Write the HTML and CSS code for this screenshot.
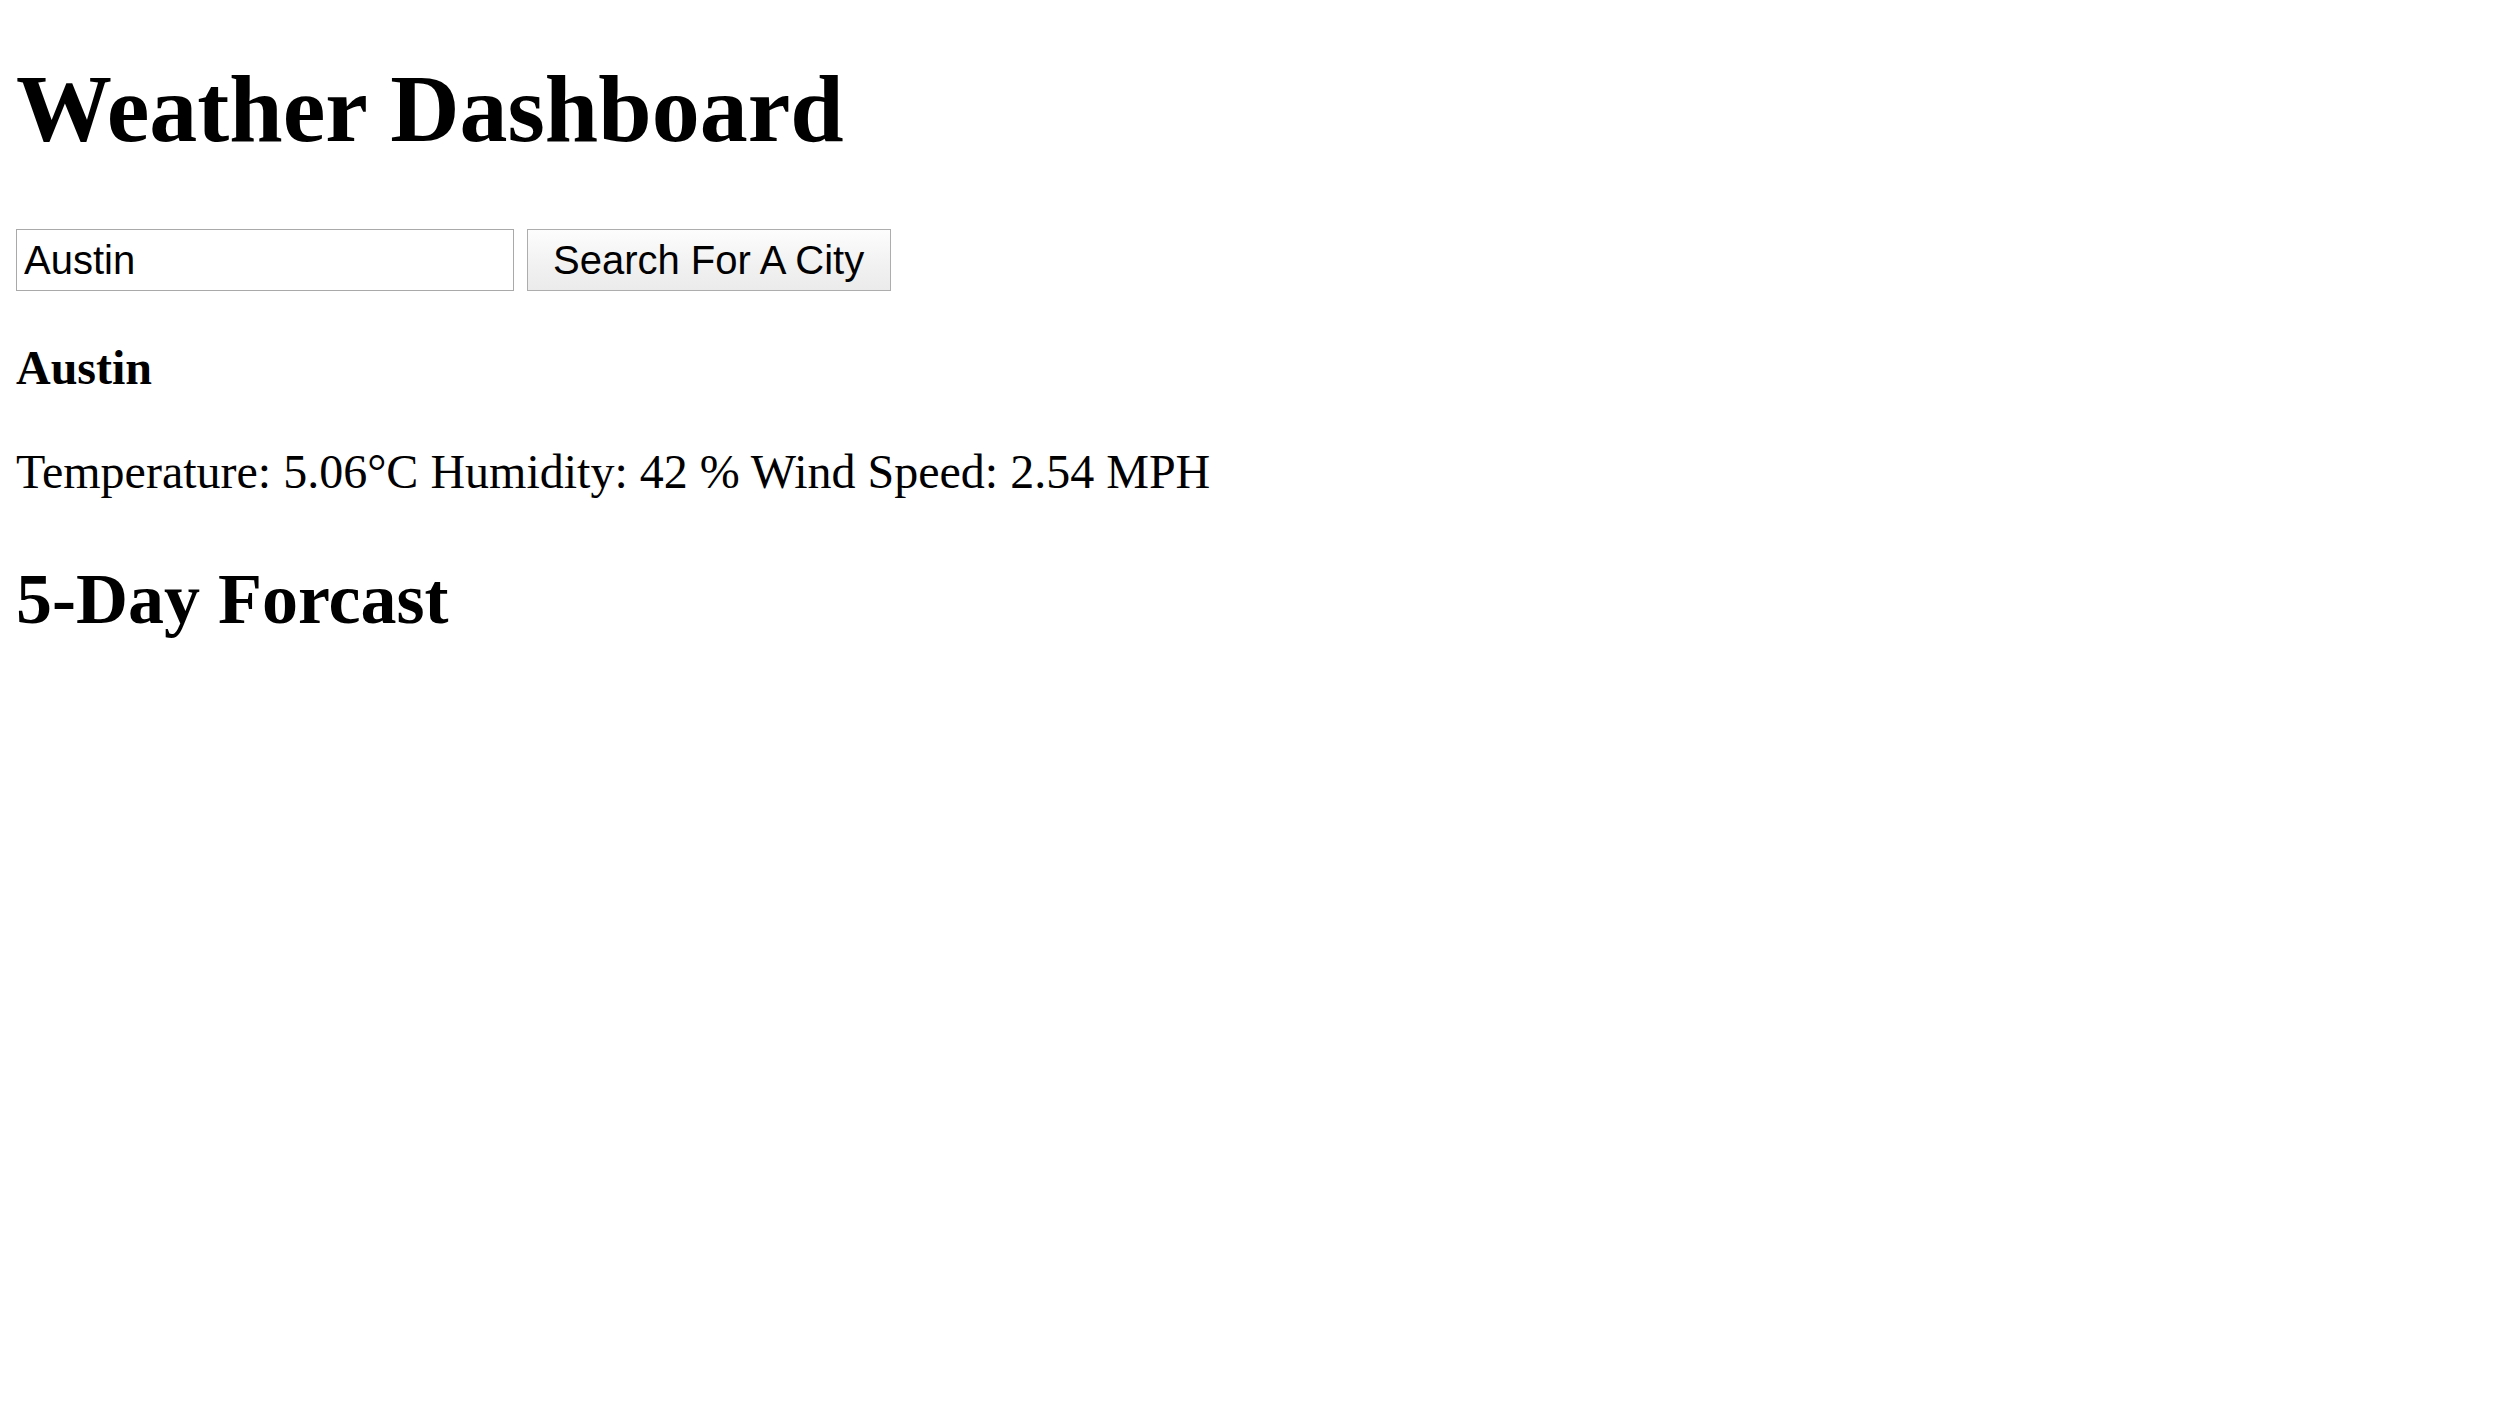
FILE: index.html
```html
<!DOCTYPE html>
<html lang="en">
<head>
<meta charset="utf-8">
<title>Weather Dashboard</title>
<link rel="stylesheet" href="styles.css">
</head>
<body>
  <main class="page">
    <h1 class="title">Weather Dashboard</h1>
    <form class="search" onsubmit="return false;">
      <input class="search-input" type="text" value="Austin">
      <button class="search-btn" type="submit">Search For A City</button>
    </form>
    <h4 class="city">Austin</h4>
    <p class="current">Temperature: 5.06°C Humidity: 42 % Wind Speed: 2.54 MPH</p>
    <h2 class="forecast-title">5-Day Forcast</h2>
  </main>
</body>
</html>
```

FILE: styles.css
```css
html, body {
  margin: 0;
  padding: 0;
  background: #ffffff;
}

body {
  font-family: "Liberation Serif", "Times New Roman", serif;
  color: #000000;
}

.page {
  padding: 0 16px;
  display: flex;
  flex-direction: column;
  align-items: flex-start;
}

.title {
  margin: 54px 0 0 0;
  font-size: 96px;
  line-height: 110px;
  font-weight: bold;
}

.search {
  margin: 65px 0 0 0;
  display: flex;
  gap: 13px;
}

.search-input {
  box-sizing: border-box;
  width: 498px;
  height: 62px;
  margin: 0;
  padding: 0 7px;
  border: 1px solid #a9a9a9;
  font-family: "Liberation Sans", Arial, sans-serif;
  font-size: 40px;
  color: #000000;
  background: #ffffff;
  outline: none;
}

.search-btn {
  box-sizing: border-box;
  height: 62px;
  margin: 0;
  padding: 0 26px 0 25px;
  border: 1px solid #adadad;
  border-radius: 0;
  background: linear-gradient(to bottom, #fdfdfd 0%, #f1f1f1 60%, #ebebeb 100%);
  font-family: "Liberation Sans", Arial, sans-serif;
  font-size: 40px;
  color: #000000;
}

.city {
  margin: 49px 0 0 0;
  font-size: 48px;
  line-height: 56px;
  font-weight: bold;
}

.current {
  margin: 47.5px 0 0 0;
  font-size: 48px;
  line-height: 56px;
}

.forecast-title {
  margin: 57.5px 0 0 0;
  font-size: 72px;
  line-height: 84px;
  font-weight: bold;
}
```
